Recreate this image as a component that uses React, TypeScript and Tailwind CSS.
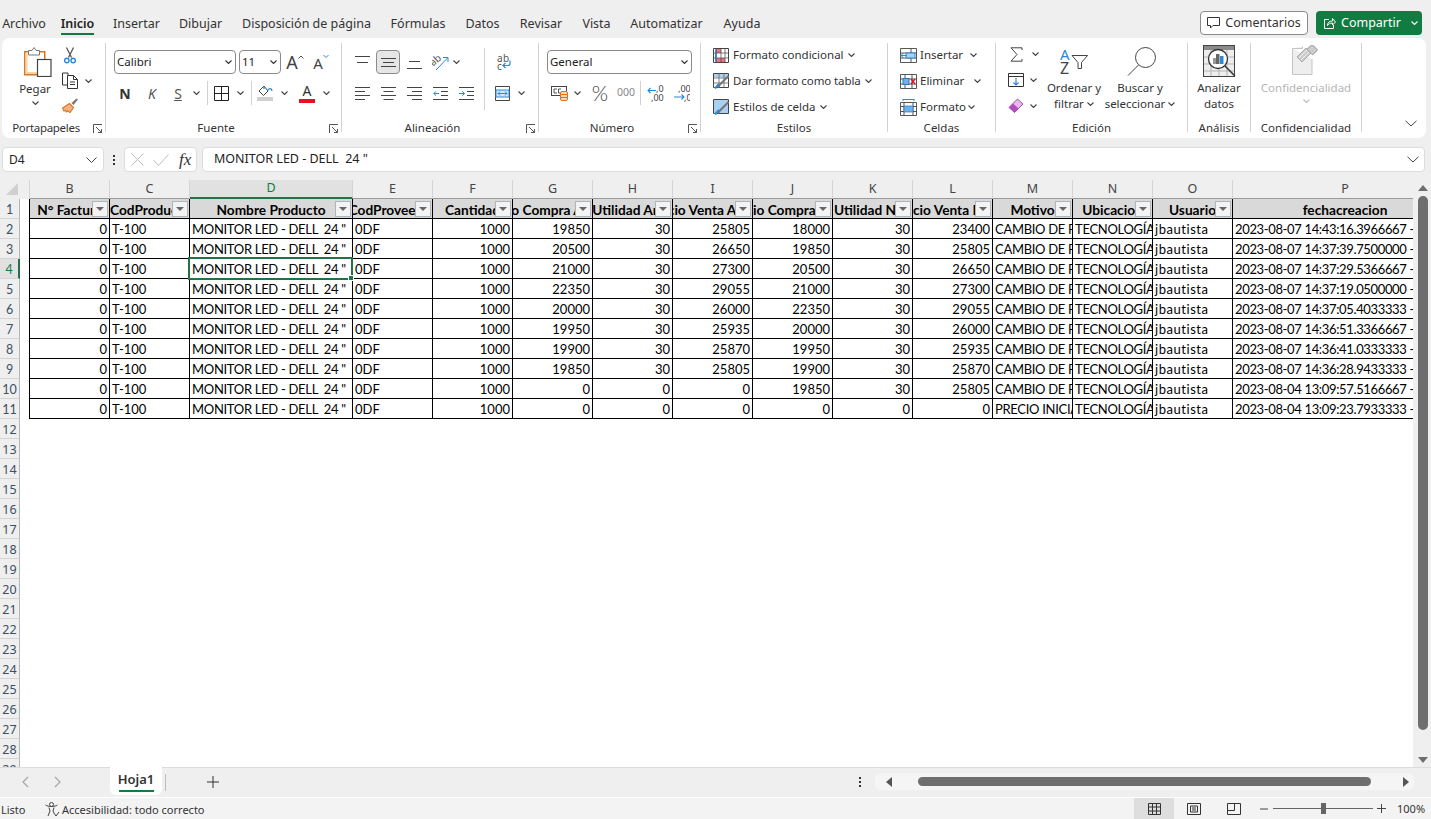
import React from "react";

const Chev = ({ c = "#444" }: { c?: string }) => (
  <svg width="7" height="4" viewBox="0 0 7 4" className="shrink-0"><path d="M.5.500 3.500 3.500 6.500.500" fill="none" stroke={c} strokeWidth="1.100" /></svg>
);
const ChevSlot = ({ c }: { c?: string }) => (
  <span className="w-[10px] h-full flex items-center justify-center shrink-0"><Chev c={c} /></span>
);
const Launcher = () => (
  <svg width="10" height="10" viewBox="0 0 10 10" className="absolute right-[2px] bottom-[4px]">
    <path d="M.5 9V.5H9M3 3l5.500 5.500M5 8.500h3.500V5" fill="none" stroke="#555" strokeWidth="1" />
  </svg>
);

const Paste = () => (
  <svg width="28" height="30" viewBox="0 0 28 30" className="ml-[6px]">
    <rect x=".75" y="4.750" width="20" height="23" fill="#fff" stroke="#d9761f" strokeWidth="1.500" />
    <path d="M2.500 6.500v19.500h11" fill="none" stroke="#f9d29d" strokeWidth="2" />
    <path d="M4.500 8V3.500h3.500L10 .5l2 3h3.500V8z" fill="#fff" stroke="#777" strokeWidth="1" />
    <rect x="13.500" y="12.500" width="13.500" height="17" fill="#fff" stroke="#444" strokeWidth="1.200" />
  </svg>
);
const Scissors = () => (
  <svg width="12" height="17" viewBox="0 0 12 17">
    <path d="M2.500 .5 7.500 10.500M9.500 .5 4.500 10.500" fill="none" stroke="#555" strokeWidth="1.300" />
    <circle cx="2.800" cy="13.500" r="2.200" fill="none" stroke="#2b88d8" strokeWidth="1.400" />
    <circle cx="9.200" cy="13.500" r="2.200" fill="none" stroke="#2b88d8" strokeWidth="1.400" />
  </svg>
);
const Copy = () => (
  <svg width="17" height="17" viewBox="0 0 17 17">
    <path d="M6 3V1H.5v12H5" fill="none" stroke="#333" />
    <path d="M5.500 3.500h6l4 4v9h-10z" fill="#fff" stroke="#333" />
    <path d="M11.500 3.500v4h4M8 10h5M8 12.500h5" fill="none" stroke="#333" />
  </svg>
);
const Brush = () => (
  <svg width="17" height="16" viewBox="0 0 17 16">
    <path d="M16 1.500 14.500 .5 9.500 5l2 2z" fill="#777" />
    <path d="M7.500 5.500 11.500 9.500 8 14.500 5.500 13l-1 1-1-1.500L2 13 .5 10z" fill="#f4b183" stroke="#d9761f" strokeWidth="1.100" />
  </svg>
);
const Grow = ({ up }: { up: boolean }) => (
  <span className="flex items-start text-[#444]">
    <span className={up ? "text-[18px] leading-[20px]" : "text-[15px] leading-[22px] mt-[1px]"}>A</span>
    <svg width="6" height="4" viewBox="0 0 6 4" className="mt-[3px]">
      <path d={up ? "M.5 3.500 3 1l2.500 2.500" : "M.5 1 3 3.500 5.500 1"} fill="none" stroke={up ? "#555" : "#2b88d8"} />
    </svg>
  </span>
);
const Borders = () => (
  <svg width="15" height="15" viewBox="0 0 15 15"><path d="M.5.5h14v14H.5zM7.500.5v14M.5 7.500h14" fill="none" stroke="#222" /></svg>
);
const Fill = () => (
  <svg width="17" height="16" viewBox="0 0 17 16">
    <path d="M7 1 2 6l4.500 4.500L11 6z" fill="none" stroke="#444" />
    <path d="M7 1v3M11 5c1.500-2 3.500-2 4 1" fill="none" stroke="#2b88d8" strokeWidth="1.300" />
    <rect x="0" y="12" width="16" height="4" fill="#d0d0d0" />
  </svg>
);
const FontColor = () => (
  <span className="flex flex-col items-center text-[#333]">
    <span className="text-[14px] leading-[14px]">A</span>
    <span className="w-[16px] h-[4px] bg-[#e81123] mt-[1px]" />
  </span>
);
const Lines = ({ d }: { d: string }) => (
  <svg width="15" height="14" viewBox="0 0 15 14"><path d={d} fill="none" stroke="#444" /></svg>
);
const Indent = ({ out }: { out: boolean }) => (
  <svg width="15" height="13" viewBox="0 0 15 13">
    <path d="M0 .5h15M8 4.500h7M8 8.500h7M0 12.500h15" fill="none" stroke="#444" />
    <path d={out ? "M6 6.500H.8M3 4.300.8 6.500 3 8.700" : "M0 6.500h5.500M3.300 4.300l2.200 2.200-2.200 2.200"} fill="none" stroke="#2b88d8" />
  </svg>
);
const Orient = () => (
  <svg width="17" height="17" viewBox="0 0 17 17">
    <text x="-1" y="9" fontSize="10" fill="#555" transform="rotate(-40 5 8)">ab</text>
    <path d="M4 16 15.500 4M11 3.500h5V8" fill="none" stroke="#2b88d8" />
  </svg>
);
const Wrap = () => (
  <svg width="16" height="18" viewBox="0 0 16 18">
    <text x="1" y="9" fontSize="10" fill="#555" letterSpacing=".5">ab</text>
    <text x="1" y="17" fontSize="10" fill="#555">c</text>
    <path d="M14 7.500v3q0 2-2 2H7M9.500 10 7 12.500 9.500 15" fill="none" stroke="#2b88d8" strokeWidth="1.200" />
  </svg>
);
const Merge = () => (
  <svg width="15" height="15" viewBox="0 0 15 15">
    <path d="M.5.500h14v14H.5z" fill="#fff" stroke="#444" />
    <rect x="1" y="4" width="13" height="7" fill="#d5e8f8" stroke="#2b88d8" />
    <path d="M3 7.500h9M5 5.500l-2 2 2 2M10 5.500l2 2-2 2" fill="none" stroke="#2b88d8" />
  </svg>
);
const Currency = () => (
  <svg width="17" height="15" viewBox="0 0 17 15">
    <rect x=".5" y=".5" width="15" height="9" fill="#fff" stroke="#444" />
    <path d="M6 3H3v4h3M10 3H7.500v4H9" fill="none" stroke="#444" strokeWidth=".9" />
    <rect x="9.500" y="5.500" width="7" height="9" rx="1.500" fill="#fbd9b5" stroke="#e2701d" />
    <path d="M9.500 8.500h7M9.500 11.500h7" stroke="#e2701d" />
  </svg>
);
const Dec = ({ inc }: { inc: boolean }) => (
  <svg width="17" height="18" viewBox="0 0 17 18">
    <text x={inc ? 9 : 5} y="8" fontSize="9" fill="#444">{inc ? ",0" : ",00"}</text>
    <text x={inc ? 4 : 11} y="17" fontSize="9" fill="#444">{inc ? ",00" : ",0"}</text>
    <path d={inc ? "M9 6.500H1M3.500 4 1 6.500 3.500 9" : "M1 13h10M8.500 10.500 11 13l-2.500 2.500"} fill="none" stroke="#2b88d8" strokeWidth="1.100" />
  </svg>
);
const Cond = () => (
  <svg width="16" height="15" viewBox="0 0 16 15">
    <path d="M.5.500h15v14H.5z" fill="#fff" stroke="#444" />
    <rect x="3" y="1" width="5" height="4" fill="#f1707b" />
    <rect x="3" y="10" width="9" height="4" fill="#f1707b" />
    <path d="M3 .5v14M8 .5v14M12 .5v14M.5 5h15M.5 10h15" fill="none" stroke="#444" strokeWidth=".7" />
    <path d="M3 1.500v12" stroke="#1f78c8" strokeWidth="1.500" />
  </svg>
);
const TableFmt = ({ full }: { full: boolean }) => (
  <svg width="16" height="16" viewBox="0 0 16 16">
    <path d="M.5.500h15v14H.5z" fill="#fff" stroke="#444" />
    <rect x="1" y="1" width="14" height={full ? 13 : 3.500} fill="#a9d1f2" />
    {!full && <path d="M.5 5h15M.5 10h15M6 .5v14M11 .5v14" fill="none" stroke="#666" strokeWidth=".8" />}
    <path d="M15.500 3 7 11.500l-2 3" fill="none" stroke="#777" strokeWidth="2" />
    <path d="M2 15.500 6 11" fill="none" stroke="#2b88d8" strokeWidth="2" />
  </svg>
);
const CellIns = () => (
  <svg width="17" height="15" viewBox="0 0 17 15">
    <path d="M.5.500h16v14H.5zM.5 5h16M.5 10h16M11 .5v14" fill="#fff" stroke="#444" strokeWidth=".9" />
    <rect x="6" y="5" width="9" height="5" fill="#a9d1f2" stroke="#2b88d8" />
    <path d="M7 7.500H1M3.500 5 1 7.500 3.500 10" fill="none" stroke="#2b88d8" />
  </svg>
);
const CellDel = () => (
  <svg width="17" height="15" viewBox="0 0 17 15">
    <path d="M.5.500h16v14H.5zM.5 5h16M.5 10h16M5 .5v14M12 .5v14" fill="#fff" stroke="#444" strokeWidth=".9" />
    <rect x="3" y="4.500" width="6" height="6" fill="#6fb1e8" stroke="#2b78c2" />
    <path d="M11 5l4 5M15 5l-4 5" stroke="#e81123" strokeWidth="1.300" />
  </svg>
);
const CellFmt = () => (
  <svg width="17" height="17" viewBox="0 0 17 17">
    <path d="M3 .5h11M3 0v2M14 0v2" stroke="#2b88d8" fill="none" />
    <path d="M.5 3.500h16v13H.5zM.5 7.500h16M.5 12.500h16M4 3.500v13M13 3.500v13" fill="#fff" stroke="#444" strokeWidth=".9" />
    <rect x="4" y="7" width="9" height="6" fill="#6fb1e8" stroke="#2b78c2" strokeWidth=".7" />
  </svg>
);
const Sigma = () => (
  <svg width="13" height="15" viewBox="0 0 13 15"><path d="M12 3V.8H1l6 6.700-6 6.700h11V12" fill="none" stroke="#444" strokeWidth="1" /></svg>
);
const FillDown = () => (
  <svg width="16" height="14" viewBox="0 0 16 14">
    <path d="M.5.500h15v13H.5zM.5 3.500h15" fill="#fff" stroke="#333" />
    <path d="M8 5v7M5.500 9.500 8 12l2.500-2.500" fill="none" stroke="#2b88d8" strokeWidth="1.200" />
  </svg>
);
const Eraser = () => (
  <svg width="16" height="16" viewBox="0 0 16 16">
    <path d="M1 9.500 9.500 1 15 6l-8.500 8.500z" fill="#e7b8ec" stroke="#a94bb5" />
    <path d="M1 9.500 5 5.500l5.500 5L6.500 14.500z" fill="#b04fbb" />
  </svg>
);
const Sort = () => (
  <svg width="28" height="26" viewBox="0 0 28 26">
    <text x="0" y="11" fontSize="15" fill="#2b88d8">A</text>
    <text x="0" y="25" fontSize="16" fill="#444">Z</text>
    <path d="M12 6.500h15.500l-6 7v6h-3.500v-6z" fill="#fff" stroke="#444" />
  </svg>
);
const Search = () => (
  <svg width="30" height="29" viewBox="0 0 30 29" className="ml-[4px]">
    <circle cx="18.500" cy="10.500" r="10" fill="#fff" stroke="#444" />
    <path d="M11.500 18 1 28.500" stroke="#444" fill="none" />
  </svg>
);
const Analyze = () => (
  <svg width="33" height="33" viewBox="0 0 33 33">
    <rect x=".5" y=".5" width="31" height="31" fill="#eee" stroke="#444" />
    <rect x="1" y="1" width="30" height="4" fill="#8a8a8a" />
    <path d="M1 12h30M1 19h30M1 26h30M8 5v26M16 5v26M24 5v26" stroke="#b5b5b5" />
    <circle cx="15" cy="14" r="9.500" fill="#fff" stroke="#333" strokeWidth="1.300" />
    <rect x="10" y="13" width="3" height="6" fill="#999" />
    <rect x="13" y="9" width="3.500" height="10" fill="#666" />
    <rect x="17" y="11" width="3.500" height="8" fill="#2b88d8" />
    <path d="M22 21l10 10" stroke="#333" strokeWidth="1.500" />
  </svg>
);
const Conf = () => (
  <svg width="28" height="30" viewBox="0 0 28 30">
    <path d="M.5 3.500h10v-2M20 14v15.500H.5V3.500" fill="#eee" stroke="#c4c4c4" />
    <path d="M10 17 5 12 14 3l5 5z" fill="#ccc" stroke="#aaa" />
    <path d="M7 13l8-8M9 15l8-8" stroke="#eee" />
    <rect x="16" y="1" width="8" height="7" rx="1" transform="rotate(45 20 5)" fill="#ccc" stroke="#aaa" />
  </svg>
);

const Slot = ({ className, children }: { className: string; children?: React.ReactNode }) => (
  <span className={"h-full flex items-center justify-center shrink-0 " + className}>{children}</span>
);
const Sep = () => <div className="w-px h-[89px] mt-[5px] bg-[#d2d2d2] shrink-0" />;
const VSep = () => <span className="block w-px h-[24px] bg-[#d2d2d2] shrink-0" />;

const Group = ({ w, label, launcher, labelCls, children }: { w: string; label: string; launcher?: boolean; labelCls?: string; children: React.ReactNode }) => (
  <div className={"relative flex flex-col h-[100px] shrink-0 " + w}>
    <div className="h-[82px]">{children}</div>
    <div className={"h-[16px] leading-[16px] text-center text-[11.5px] text-[#333] whitespace-nowrap " + (launcher ? "pr-[15px] " : "") + (labelCls || "")}>{label}</div>
    {launcher && <Launcher />}
  </div>
);

const Select = ({ w, text }: { w: string; text: string }) => (
  <div className={"h-[24px] rounded-[4px] border border-[#8a8a8a] bg-white flex items-center justify-between pl-[2px] pr-[3px] shrink-0 " + w}>
    <span className="text-[11.5px] text-[#222]">{text}</span>
    <Chev c="#333" />
  </div>
);

const tabs: [string, string][] = [
  ["Archivo", "w-[42px] -mr-[4px]"], ["Inicio", "w-[33px]"], ["Insertar", "w-[45px]"], ["Dibujar", "w-[43px]"],
  ["Disposición de página", "w-[131px] -ml-[1px]"], ["Fórmulas", "w-[54px] -ml-[1px]"], ["Datos", "w-[35px]"], ["Revisar", "w-[42px]"],
  ["Vista", "w-[29px]"], ["Automatizar", "w-[71px]"], ["Ayuda", "w-[36px] ml-[2px]"],
];

const TopBar = () => (
  <div className="h-[38px] flex items-center pl-[3px] pr-[9px] shrink-0 text-[12.500px] text-[#333]">
    <div className="flex gap-[20px] pt-[10px]">
      {tabs.map(([t, w]) => (
        <span key={t} className={"relative whitespace-nowrap flex justify-center min-w-0 shrink-0 " + w + (t === "Inicio" ? " font-semibold text-[#222]" : "")}>
          {t}
          {t === "Inicio" && <span className="absolute left-0 right-0 top-[18px] h-[2px] bg-[#107c41]" />}
        </span>
      ))}
    </div>
    <div className="ml-auto flex gap-[8px] pt-[8px]">
      <div className="w-[108px] h-[24px] rounded-[4px] border border-[#8a8a8a] bg-white flex items-center justify-center gap-[5px]">
        <svg width="13" height="12" viewBox="0 0 13 12"><path d="M.5.500h12v8H6L3.500 11V8.500h-3z" fill="none" stroke="#333" /></svg>
        <span className="pt-[1px]">Comentarios</span>
      </div>
      <div className="w-[106px] h-[24px] rounded-[4px] bg-[#107c41] text-white flex items-center pl-[8px] gap-[5px]">
        <svg width="12" height="12" viewBox="0 0 12 12"><path d="M5 2.500H.5v9h9V8M3.500 8.500c0-3 2-4.500 5-4.500V1.500L11.500 5l-3 3V6C6 6 4.500 7 3.500 8.500z" fill="none" stroke="#fff" /></svg>
        <span className="pt-[1px]">Compartir</span>
        <span className="ml-auto mr-[4px]"><Chev c="#fff" /></span>
      </div>
    </div>
  </div>
);

const Ribbon = () => (
  <div className="ml-[2px] w-[1424px] h-[100px] bg-white rounded-[8px] flex shrink-0 text-[11.500px] text-[#333]">
    <Group w="w-[103px]" label="Portapapeles" launcher labelCls="tracking-[-0.3px]">
      <div className="flex pl-[15px] pt-[9px]">
        <div className="w-[36px] flex flex-col items-center">
          <Paste />
          <span className="mt-[4px] leading-[16px]">Pegar</span>
          <span className="mt-[4px]"><Chev /></span>
        </div>
        <div className="ml-[4px] flex flex-col -mt-[4px]">
          <div className="h-[25px] w-[26px] flex items-center justify-center"><Scissors /></div>
          <div className="h-[25px] flex items-center"><Slot className="w-[26px]"><Copy /></Slot><span className="ml-[2px]"><Chev /></span></div>
          <div className="h-[25px] w-[26px] flex items-center justify-center"><Brush /></div>
        </div>
      </div>
    </Group>
    <Sep />
    <Group w="w-[235px]" label="Fuente" launcher>
      <div className="pl-[8px] pt-[12px]">
        <div className="flex h-[24px] items-center">
          <Select w="w-[122px]" text="Calibri" />
          <span className="ml-[3px]"><Select w="w-[42px]" text="11" /></span>
          <Slot className="w-[24px] ml-[2px]"><Grow up /></Slot>
          <Slot className="w-[24px] ml-[2px]"><Grow up={false} /></Slot>
        </div>
        <div className="flex h-[24px] items-center mt-[7px] -ml-[1px]">
          <Slot className="w-[26px] pr-[2px] text-[14px] font-bold text-[#333]">N</Slot>
          <Slot className="w-[26px] text-[14px] italic text-[#555]">K</Slot>
          <Slot className="w-[26px] text-[14px] underline text-[#555]">S</Slot>
          <ChevSlot />
          <span className="ml-[6px]"><VSep /></span>
          <Slot className="w-[27px]"><Borders /></Slot>
          <ChevSlot />
          <span className="ml-[6px]"><VSep /></span>
          <Slot className="w-[27px]"><Fill /></Slot>
          <ChevSlot />
          <Slot className="w-[28px] ml-[4px]"><FontColor /></Slot>
          <ChevSlot />
        </div>
      </div>
    </Group>
    <Sep />
    <Group w="w-[196px]" label="Alineación" launcher>
      <div className="flex pl-[7px] pt-[12px]">
        <div className="w-[135px]">
          <div className="flex h-[24px] items-center">
            <Slot className="w-[26px]"><Lines d="M0 1.500h15M2 7.500h11" /></Slot>
            <span className="w-[24px] h-[24px] ml-[1px] rounded-[4px] border border-[#8a8a8a] bg-[#e6e6e6] flex items-center justify-center shrink-0"><Lines d="M0 3.500h15M2 7.500h11M0 11.500h15" /></span>
            <Slot className="w-[26px] ml-[1px]"><Lines d="M2 6.500h11M0 13.500h15" /></Slot>
            <Slot className="w-[26px]"><Orient /></Slot>
            <span className="-ml-[2px]"><ChevSlot /></span>
          </div>
          <div className="flex h-[24px] items-center mt-[7px]">
            <Slot className="w-[26px]"><Lines d="M0 1.500h15M0 5.500h10M0 9.500h15M0 13.500h10" /></Slot>
            <Slot className="w-[26px]"><Lines d="M0 1.500h15M2.500 5.500h10M0 9.500h15M2.500 13.500h10" /></Slot>
            <Slot className="w-[26px]"><Lines d="M0 1.500h15M5 5.500h10M0 9.500h15M5 13.500h10" /></Slot>
            <Slot className="w-[26px]"><Indent out /></Slot>
            <Slot className="w-[26px]"><Indent out={false} /></Slot>
          </div>
        </div>
        <div className="w-px h-[62px] -mt-[2px] bg-[#d2d2d2]" />
        <div>
          <div className="flex h-[24px] items-center"><Slot className="w-[38px]"><Wrap /></Slot></div>
          <div className="flex h-[24px] items-center mt-[7px]">
            <Slot className="w-[34px]"><Merge /></Slot>
            <span className="-ml-[3px]"><ChevSlot /></span>
          </div>
        </div>
      </div>
    </Group>
    <Sep />
    <Group w="w-[161px]" label="Número" launcher>
      <div className="pl-[8px] pt-[12px]">
        <Select w="w-[145px]" text="General" />
        <div className="flex h-[24px] items-center mt-[7px]">
          <Slot className="w-[24px]"><Currency /></Slot>
          <Slot className="w-[12px]"><Chev /></Slot>
          <Slot className="w-[26px] ml-[4px] [font-family:Lato,sans-serif] font-light text-[21px] text-[#444]">%</Slot>
          <Slot className="w-[26px] text-[10.500px] text-[#888]">000</Slot>
          <span className="ml-[1px]"><VSep /></span>
          <Slot className="w-[26px] ml-[1px]"><Dec inc /></Slot>
          <Slot className="w-[26px]"><Dec inc={false} /></Slot>
        </div>
      </div>
    </Group>
    <Sep />
    <Group w="w-[186px]" label="Estilos">
      <div className="pl-[12px] pt-[4px]">
        <div className="h-[26px] flex items-center gap-[4px]"><Cond /><span className="whitespace-nowrap">Formato condicional</span><Chev /></div>
        <div className="h-[26px] flex items-center gap-[4px]"><TableFmt full={false} /><span className="whitespace-nowrap tracking-[-0.1px]">Dar formato como tabla</span><Chev /></div>
        <div className="h-[26px] flex items-center gap-[4px]"><TableFmt full /><span className="whitespace-nowrap">Estilos de celda</span><Chev /></div>
      </div>
    </Group>
    <Sep />
    <Group w="w-[107px]" label="Celdas">
      <div className="pl-[12px] pt-[4px]">
        <div className="h-[26px] flex items-center"><CellIns /><span className="ml-[3px]">Insertar</span><span className="ml-[7px]"><Chev /></span></div>
        <div className="h-[26px] flex items-center"><CellDel /><span className="ml-[3px]">Eliminar</span><span className="ml-[10px]"><Chev /></span></div>
        <div className="h-[26px] flex items-center"><CellFmt /><span className="ml-[3px]">Formato</span><span className="ml-[2px]"><Chev /></span></div>
      </div>
    </Group>
    <Sep />
    <Group w="w-[191px]" label="Edición">
      <div className="flex pl-[9px]">
        <div className="w-[39px] pt-[3px]">
          <div className="h-[26px] flex items-center"><Slot className="w-[22px]"><Sigma /></Slot><span className="ml-[5px]"><Chev /></span></div>
          <div className="h-[26px] flex items-center"><Slot className="w-[22px]"><FillDown /></Slot><span className="ml-[3px]"><Chev /></span></div>
          <div className="h-[26px] flex items-center"><Slot className="w-[22px]"><Eraser /></Slot><span className="ml-[3px]"><Chev /></span></div>
        </div>
        <div className="w-[60px] flex flex-col items-center pt-[11px] leading-[16px]">
          <Sort />
          <span className="mt-[5px] whitespace-nowrap">Ordenar y</span>
          <span className="flex items-center gap-[3px] whitespace-nowrap">filtrar <Chev /></span>
        </div>
        <div className="w-[72px] flex flex-col items-center pt-[9px] leading-[16px]">
          <Search />
          <span className="mt-[4px] whitespace-nowrap">Buscar y</span>
          <span className="flex items-center gap-[3px] whitespace-nowrap">seleccionar <Chev /></span>
        </div>
      </div>
    </Group>
    <Sep />
    <Group w="w-[62px]" label="Análisis">
      <div className="flex flex-col items-center pt-[7px] leading-[16px]">
        <Analyze />
        <span className="mt-[2px]">Analizar</span>
        <span>datos</span>
      </div>
    </Group>
    <Sep />
    <Group w="w-[110px]" label="Confidencialidad">
      <div className="flex flex-col items-center pt-[7px] leading-[16px] text-[#b5b5b5]">
        <Conf />
        <span className="mt-[5px]">Confidencialidad</span>
        <span className="mt-[3px]"><Chev c="#bdbdbd" /></span>
      </div>
    </Group>
    <Sep />
    <div className="flex-1 flex justify-end items-end pr-[9px] pb-[11px]">
      <svg width="12" height="7" viewBox="0 0 12 7"><path d="M.5.800 6 6 11.500.800" fill="none" stroke="#444" /></svg>
    </div>
  </div>
);

const FormulaBar = () => (
  <div className="mt-[9px] h-[25px] flex shrink-0 text-[12px] text-[#222]">
    <div className="ml-[2px] w-[102px] rounded-[4px] bg-white border border-[#dcdcdc] flex items-center justify-between pl-[6px] pr-[6px]">
      <span>D4</span>
      <svg width="11" height="6" viewBox="0 0 11 6"><path d="M.5.500l5 5 5-5" fill="none" stroke="#444" /></svg>
    </div>
    <div className="w-[20px] flex flex-col items-center justify-center gap-[2px]">
      <span className="w-[2px] h-[2px] bg-[#333]" /><span className="w-[2px] h-[2px] bg-[#333]" /><span className="w-[2px] h-[2px] bg-[#333]" />
    </div>
    <div className="w-[73px] rounded-[4px] bg-white border border-[#dcdcdc] flex items-center pl-[6px]">
      <svg width="13" height="13" viewBox="0 0 13 13"><path d="M.5.500l12 12M12.500.500l-12 12" stroke="#bdbdbd" /></svg>
      <svg width="16" height="12" viewBox="0 0 16 12" className="ml-[9px]"><path d="M.5 6l5 5.500L15.500.500" fill="none" stroke="#bdbdbd" /></svg>
      <span className="ml-[10px] [font-family:'Liberation_Serif',serif] italic text-[17px] leading-none text-[#333]">fx</span>
    </div>
    <div className="ml-[5px] w-[1223px] rounded-[4px] bg-white border border-[#dcdcdc] flex items-center justify-between pl-[11px] pr-[5px]">
      <span className="whitespace-pre text-[12.500px]">MONITOR LED - DELL  24 "</span>
      <svg width="12" height="7" viewBox="0 0 12 7"><path d="M.5.800 6 6 11.500.800" fill="none" stroke="#444" /></svg>
    </div>
  </div>
);

const colW = ["w-[80px]", "w-[80px]", "w-[163px]", "w-[80px]", "w-[80px]", "w-[80px]", "w-[80px]", "w-[80px]", "w-[80px]", "w-[80px]", "w-[80px]", "w-[80px]", "w-[80px]", "w-[80px]", "w-[225px]"];
const letters = "BCDEFGHIJKLMNOP".split("");
const heads = ["N° Factura", "CodProducto", "Nombre Producto", "CodProveedor", "Cantidad", "Precio Compra Anterior", "Utilidad Ante", "Precio Venta Anterior", "Precio Compra Nuevo", "Utilidad Nue", "Precio Venta Nuevo", "Motivo", "Ubicacion", "Usuario", "fechacreacion"];

const nums = [
  [19850, 30, 25805, 18000, 30, 23400, "14:43:16.3966667", "2023-08-07", "CAMBIO DE PRECIO"],
  [20500, 30, 26650, 19850, 30, 25805, "14:37:39.7500000", "2023-08-07", "CAMBIO DE PRECIO"],
  [21000, 30, 27300, 20500, 30, 26650, "14:37:29.5366667", "2023-08-07", "CAMBIO DE PRECIO"],
  [22350, 30, 29055, 21000, 30, 27300, "14:37:19.0500000", "2023-08-07", "CAMBIO DE PRECIO"],
  [20000, 30, 26000, 22350, 30, 29055, "14:37:05.4033333", "2023-08-07", "CAMBIO DE PRECIO"],
  [19950, 30, 25935, 20000, 30, 26000, "14:36:51.3366667", "2023-08-07", "CAMBIO DE PRECIO"],
  [19900, 30, 25870, 19950, 30, 25935, "14:36:41.0333333", "2023-08-07", "CAMBIO DE PRECIO"],
  [19850, 30, 25805, 19900, 30, 25870, "14:36:28.9433333", "2023-08-07", "CAMBIO DE PRECIO"],
  [0, 0, 0, 19850, 30, 25805, "13:09:57.5166667", "2023-08-04", "CAMBIO DE PRECIO"],
  [0, 0, 0, 0, 0, 0, "13:09:23.7933333", "2023-08-04", "PRECIO INICIAL"],
];

const RowNum = ({ n, active }: { n: number; active?: boolean }) => (
  <div className={"w-[20px] h-full shrink-0 flex items-center justify-center pt-[4px] text-[12.500px] border-b border-[#d4d4d4] " + (active ? "bg-[#e1e1e1] text-[#107c41] border-r-2 border-r-[#217346]" : "bg-[#efefef] text-[#3c4f63] border-r border-r-[#b5b5b5]")}>{n}</div>
);

const Cell = ({ w, right, children, selected, cls }: { w: string; right?: boolean; children: React.ReactNode; selected?: boolean; cls?: string }) => (
  <div className={"relative h-full shrink-0 border-r border-b border-black flex items-center pt-[3px] " + w}>
    <div className={"w-full overflow-hidden whitespace-pre px-[2px] " + (right ? "text-right " : "") + (cls || "")}>{children}</div>
    {selected && (
      <div className="absolute -left-[2px] -top-[2px] w-[165px] h-[23px] border-2 border-[#217346] z-10">
        <span className="absolute -right-[3px] -bottom-[3px] w-[6px] h-[6px] bg-[#217346] border border-white" />
      </div>
    )}
  </div>
);

const Sheet = () => (
  <div className="mt-[8px] h-[587px] flex shrink-0">
    <div className="w-[1413px] h-full overflow-hidden bg-white flex flex-col">
      <div className="h-[19px] flex shrink-0 bg-[#efefef] text-[12.500px] text-[#444]">
        <div className="w-[30px] shrink-0 border-r border-[#d4d4d4] flex items-end pl-[6px] pb-[4px]">
          <svg width="12" height="12" viewBox="0 0 12 12"><path d="M12 0v12H0z" fill="#d0d0d0" /></svg>
        </div>
        {letters.map((l, i) => (
          <div key={l} className={"shrink-0 flex items-center justify-center border-r border-[#d4d4d4] " + colW[i] + (l === "D" ? " bg-[#e1e1e1] text-[#107c41] border-b-2 border-b-[#217346]" : " border-b border-b-[#9b9b9b]")}>{l}</div>
        ))}
      </div>
      <div className="[font-family:Lato,sans-serif] text-[13px] text-black">
        <div className="h-[20px] flex">
          <RowNum n={1} />
          <div className="w-[10px] h-full shrink-0 border-r border-black" />
          {heads.map((h, i) => (
            <div key={h} className={"relative h-full shrink-0 bg-[#d9d9d9] border-r border-b border-black overflow-hidden flex items-center pt-[3px] text-[13.700px] font-bold " + colW[i] + (i === 1 ? " justify-start" : " justify-center")}>
              <span className="whitespace-nowrap shrink-0">{h}</span>
              {i < 14 && (
                <span className="absolute right-0 top-0 bottom-0 w-[17px] bg-[#d9d9d9] flex items-center">
                  <span className="w-[16px] h-[16px] bg-[#f3f3f3] border border-[#adb5bd] flex items-center justify-center">
                    <svg width="8" height="4" viewBox="0 0 8 4"><path d="M0 0h8L4 4z" fill="#666" /></svg>
                  </span>
                </span>
              )}
            </div>
          ))}
        </div>
        {nums.map((r, idx) => (
          <div key={idx} className="h-[20px] flex">
            <RowNum n={idx + 2} active={idx === 2} />
            <div className="w-[10px] h-full shrink-0 border-r border-black" />
            <Cell w={colW[0]} right>0</Cell>
            <Cell w={colW[1]}>T-100</Cell>
            <Cell w={colW[2]} selected={idx === 2} cls="tracking-[-0.3px]">{'MONITOR LED - DELL  24 "'}</Cell>
            <Cell w={colW[3]}>0DF</Cell>
            <Cell w={colW[4]} right>1000</Cell>
            {r.slice(0, 6).map((v, j) => <Cell key={j} w={colW[5 + j]} right>{v}</Cell>)}
            <Cell w={colW[11]} cls="tracking-[-0.3px]">{r[8]}</Cell>
            <Cell w={colW[12]} cls="tracking-[-0.3px]">TECNOLOGÍA</Cell>
            <Cell w={colW[13]} cls="tracking-[0.55px]">jbautista</Cell>
            <Cell w={colW[14]} cls="tracking-[-0.35px]">{r[7]} {r[6]} -05:00</Cell>
          </div>
        ))}
      </div>
      {Array.from({ length: 18 }, (_, i) => (
        <div key={i} className="h-[20px] flex shrink-0"><RowNum n={i + 12} /></div>
      ))}
    </div>
    <div className="w-[18px] h-full flex flex-col items-center">
      <svg width="10" height="6" viewBox="0 0 10 6" className="mt-[5px] ml-[1px]"><path d="M5 0l5 6H0z" fill="#6e6e6e" /></svg>
      <div className="w-[10px] h-[534px] mt-[5px] ml-[1px] rounded-full bg-[#6e6e6e]" />
      <svg width="10" height="6" viewBox="0 0 10 6" className="mt-[27px] ml-[1px]"><path d="M0 0h10L5 6z" fill="#6e6e6e" /></svg>
    </div>
  </div>
);

const SheetTabs = () => (
  <div className="h-[30px] flex shrink-0 border-t border-[#dcdcdc]">
    <div className="w-[110px] flex items-center pl-[21px] gap-[25px] shrink-0 -mt-px">
      <svg width="8" height="12" viewBox="0 0 8 12"><path d="M7 1 2 6l5 5" fill="none" stroke="#a5a5a5" strokeWidth="1.200" /></svg>
      <svg width="8" height="12" viewBox="0 0 8 12"><path d="M1 1l5 5-5 5" fill="none" stroke="#a5a5a5" strokeWidth="1.200" /></svg>
    </div>
    <div className="w-[52px] h-[28px] -mt-px bg-white rounded-b-[6px] flex flex-col items-center pt-[3px] shrink-0">
      <span className="text-[13px] font-semibold leading-[18px] text-[#333]">Hoja1</span>
      <span className="w-[35px] h-[2px] bg-[#107c41] mt-[2px]" />
    </div>
    <div className="w-px h-[17px] bg-[#bdbdbd] ml-[3px] mt-[6px]" />
    <div className="ml-[41px] flex items-center h-[28px]">
      <svg width="12" height="12" viewBox="0 0 12 12"><path d="M6 0v12M0 6h12" stroke="#333" /></svg>
    </div>
    <div className="ml-[636px] w-[10px] h-[28px] flex flex-col items-center justify-center gap-[2px]">
      <span className="w-[2px] h-[2px] bg-[#333]" /><span className="w-[2px] h-[2px] bg-[#333]" /><span className="w-[2px] h-[2px] bg-[#333]" />
    </div>
    <div className="ml-[10px] mt-[5px] w-[539px] h-[17px] rounded-[6px] bg-[#f5f5f5] flex items-center pl-[11px]">
      <svg width="6" height="10" viewBox="0 0 6 10"><path d="M6 0v10L0 5z" fill="#555" /></svg>
      <div className="ml-[26px] w-[453px] h-[9px] rounded-full bg-[#6e6e6e]" />
      <svg width="6" height="10" viewBox="0 0 6 10" className="ml-[32px]"><path d="M0 0v10l6-5z" fill="#555" /></svg>
    </div>
  </div>
);

const StatusBar = () => (
  <div className="h-[22px] flex items-center bg-[#f3f3f3] border-t border-white shrink-0 text-[11px] text-[#333]">
    <span className="ml-[1px] w-[44px] pt-[3px]">Listo</span>
    <svg width="15" height="15" viewBox="0 0 15 15" className="mt-[2px]"><circle cx="6.500" cy="2.500" r="2" fill="none" stroke="#444" /><path d="M.5 3c3 2 9 2 12 0M4 5.500 5 9 3 14M9 5.500 8 9l1.500 3M9.500 12l1.500 2 3-4" fill="none" stroke="#444" /></svg>
    <span className="ml-[2px] pt-[3px]">Accesibilidad: todo correcto</span>
    <div className="ml-auto flex items-center h-full">
      <div className="w-[40px] h-full bg-[#dedede] flex items-center justify-center">
        <svg width="13" height="12" viewBox="0 0 13 12"><path d="M.5.500h12v11H.5zM.5 4h12M.5 8h12M4.500.5v11M8.500.5v11" fill="none" stroke="#333" /></svg>
      </div>
      <div className="w-[40px] h-full flex items-center justify-center">
        <svg width="14" height="12" viewBox="0 0 14 12"><path d="M.5.500h13v11H.5zM3.500 3h7v6h-7zM5 5h4M5 7h4" fill="none" stroke="#333" /></svg>
      </div>
      <div className="w-[40px] h-full flex items-center justify-center">
        <svg width="14" height="12" viewBox="0 0 14 12"><path d="M.5.500h13v11H.5zM.5 7.500h7v-7" fill="none" stroke="#333" /></svg>
      </div>
      <svg width="8" height="2" viewBox="0 0 8 2" className="ml-[6px]"><path d="M0 1h8" stroke="#444" /></svg>
      <div className="relative ml-[5px] w-[100px] h-px bg-[#666]">
        <span className="absolute left-[48px] -top-[5px] w-[5px] h-[11px] bg-[#666]" />
      </div>
      <svg width="9" height="9" viewBox="0 0 9 9" className="ml-[4px]"><path d="M4.500 0v9M0 4.500h9" stroke="#444" /></svg>
      <span className="ml-[11px] mr-[5px] w-[29px] pt-[2px]">100%</span>
    </div>
  </div>
);

export default function App() {
  return (
    <div className="w-[1431px] h-[819px] overflow-hidden bg-[#efefef] flex flex-col [font-family:'Noto_Sans',sans-serif]">
      <TopBar />
      <Ribbon />
      <FormulaBar />
      <Sheet />
      <SheetTabs />
      <StatusBar />
    </div>
  );
}
